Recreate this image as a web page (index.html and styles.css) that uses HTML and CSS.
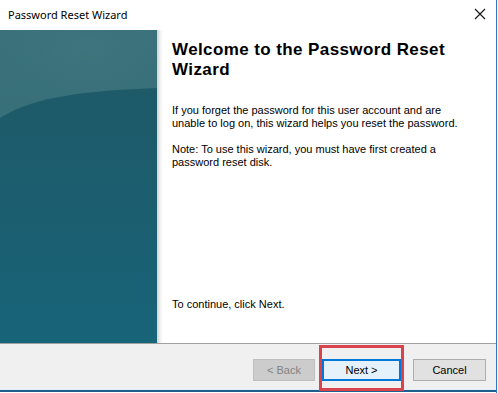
FILE: index.html
```html
<!DOCTYPE html>
<html>
<head>
<meta charset="utf-8">
<link rel="stylesheet" href="styles.css">
</head>
<body>
<div class="window">
  <div class="titlebar">
    <span class="title">Password Reset Wizard</span>
    <svg class="close" width="12" height="12" viewBox="0 0 12 12"><path d="M1 1L11 11M11 1L1 11" stroke="#111" stroke-width="1.1" fill="none"/></svg>
  </div>
  <div class="main">
    <div class="banner">
      <svg width="157" height="313" viewBox="0 0 157 313" preserveAspectRatio="none">
        <defs>
          <linearGradient id="top" x1="0" y1="0" x2="0" y2="1">
            <stop offset="0" stop-color="#3a717a"/>
            <stop offset="1" stop-color="#336c76"/>
          </linearGradient>
          <radialGradient id="glow" cx="0.55" cy="0.15" r="0.6">
            <stop offset="0" stop-color="#42777f" stop-opacity="0.6"/>
            <stop offset="1" stop-color="#3a737c" stop-opacity="0"/>
          </radialGradient>
          <linearGradient id="low" x1="0" y1="0" x2="0" y2="1">
            <stop offset="0" stop-color="#1e5a68"/>
            <stop offset="0.5" stop-color="#1b5e70"/>
            <stop offset="1" stop-color="#186479"/>
          </linearGradient>
        </defs>
        <rect width="157" height="313" fill="url(#top)"/>
        <rect width="157" height="110" fill="url(#glow)"/>
        <path d="M0 88 C28 70 70 61 157 58 L157 313 L0 313 Z" fill="url(#low)"/>
      </svg>
    </div>
    <div class="shade"></div>
    <div class="content">
      <h1 class="heading">Welcome to the Password Reset Wizard</h1>
      <p class="text">If you forget the password for this user account and are unable to log on, this wizard helps you reset the password.</p>
      <p class="text">Note: To use this wizard, you must have first created a password reset disk.</p>
      <p class="text continue">To continue, click Next.</p>
    </div>
  </div>
  <div class="footer">
    <button class="btn disabled">&lt; Back</button>
    <div class="next-wrap">
      <button class="btn primary">Next &gt;</button>
      <div class="highlight"></div>
    </div>
    <button class="btn cancel">Cancel</button>
  </div>
  <div class="bottom-edge"></div>
</div>
</body>
</html>
```
FILE: styles.css
```css
html, body {
  margin: 0;
  padding: 0;
  background: #ffffff;
}
body {
  width: 498px;
  height: 393px;
  overflow: hidden;
}
.window {
  width: 496px;
  height: 393px;
  border-right: 1px solid #2b79c2;
  display: flex;
  flex-direction: column;
  box-sizing: content-box;
}
.titlebar {
  height: 30px;
  flex: none;
  display: flex;
  align-items: center;
  justify-content: space-between;
  padding: 0 10px 0 8px;
  background: #ffffff;
}
.title {
  font-family: "Noto Sans", "Open Sans", sans-serif;
  font-size: 11px;
  color: #000;
  position: relative;
  top: -1px;
}
.close {
  display: block;
  position: relative;
  top: -1px;
}
.main {
  height: 313px;
  flex: none;
  display: flex;
  background: #ffffff;
}
.banner {
  width: 157px;
  height: 313px;
  flex: none;
}
.banner svg {
  display: block;
}
.shade {
  width: 6px;
  flex: none;
  background: linear-gradient(to right, #cfd3d4, #f4f4f4 60%, #ffffff);
}
.content {
  flex: 1;
  padding: 10px 0 0 9px;
  display: flex;
  flex-direction: column;
  font-family: "Liberation Sans", Arial, sans-serif;
}
.heading {
  margin: 0;
  font-size: 17px;
  font-weight: bold;
  line-height: 20px;
  letter-spacing: 0.4px;
  color: #000;
  width: 300px;
}
.text {
  margin: 0;
  font-size: 11px;
  line-height: 13px;
  color: #000;
  width: 300px;
}
.heading + .text {
  margin-top: 24px;
}
.text + .text {
  margin-top: 13px;
}
.continue {
  margin-top: auto !important;
  margin-bottom: 32px;
}
.footer {
  height: 45px;
  flex: none;
  border-top: 1px solid #a0a0a0;
  background: #f0f0f0;
  display: flex;
  align-items: flex-start;
  padding: 15px 0 0 253px;
  box-sizing: border-box;
}
.btn {
  font-family: "Liberation Sans", Arial, sans-serif;
  font-size: 11px;
  height: 22px;
  padding: 0;
  margin: 0;
  box-sizing: border-box;
  color: #000;
  background: #e1e1e1;
  border: 1px solid #adadad;
  display: block;
}
.disabled {
  width: 62px;
  background: #cccccc;
  border-color: #bfbfbf;
  color: #838383;
}
.next-wrap {
  position: relative;
  margin-left: 7px;
}
.primary {
  width: 79px;
  background: #e5f1fb;
  border: 2px solid #0078d7;
}
.highlight {
  position: absolute;
  left: -3px;
  top: -14px;
  width: 85px;
  height: 46px;
  box-sizing: border-box;
  border: 3px solid #d9434e;
}
.cancel {
  width: 73px;
  margin-left: 12px;
}
.bottom-edge {
  height: 4px;
  flex: none;
  background: linear-gradient(to bottom, #f0f0f0 0, #e8f1fa 1px, #dcebf8 2px, #1d5e8e 2px, #1d5e8e 4px);
}
```
